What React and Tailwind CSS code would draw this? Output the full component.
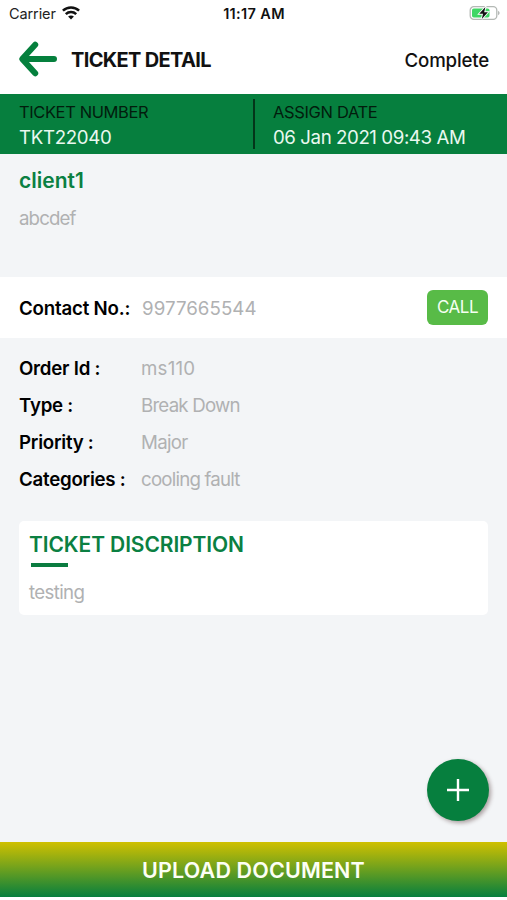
import React from 'react';

const details = [
    { label: 'Order Id :', value: 'ms110', spacing: 'tracking-[0.2px]' },
    { label: 'Type :', value: 'Break Down', spacing: 'tracking-[-0.8px]' },
    { label: 'Priority :', value: 'Major', spacing: 'tracking-[-0.7px]' },
    { label: 'Categories :', value: 'cooling fault', spacing: 'tracking-[-0.8px]' },
];

const WifiIcon = () => (
    <svg className="w-[18px] h-[14px] relative -top-[1px]" viewBox="0 0 18 14" fill="none" stroke="#111" strokeWidth="2.5">
        <path d="M0.9 4.7C5.4 0.4 12.6 0.4 17.1 4.7" />
        <path d="M3.8 8.1C6.7 5.3 11.3 5.3 14.2 8.1" />
        <path d="M6.1 10.6C7.7 9.1 10.3 9.1 11.9 10.6L9 13.5Z" fill="#111" stroke="none" />
    </svg>
);

const BatteryIcon = () => (
    <svg className="w-[32px] h-[16px] relative -top-[1px]" viewBox="0 0 32 16">
        <rect x="1.2" y="1.7" width="26.6" height="12.6" rx="3.6" fill="#fff" stroke="#b4b9b5" strokeWidth="1.3" />
        <path d="M29.2 5.8C31 6.5 31 9.5 29.2 10.2Z" fill="#a5aaa6" />
        <rect x="3" y="3.4" width="17.5" height="9.2" rx="1.8" fill="#3fd765" />
        <path d="M16.4 2L10.2 8.8H14L12.8 14L18.9 7.2H15.2Z" fill="#111" stroke="#fff" strokeWidth="1.8" paintOrder="stroke" />
    </svg>
);

const BackArrow = () => (
    <svg className="w-[40px] h-[38px] relative -top-[2px]" viewBox="0 0 40 38" fill="none" stroke="#05803d" strokeWidth="6" strokeLinecap="round" strokeLinejoin="round">
        <path d="M36 19H6M17.2 4.7L4.2 19L17.2 33.3" />
    </svg>
);

const InfoRow = ({ label, value, spacing }) => (
    <div className="flex items-center h-[36.8px]">
        <span className="w-[122px] text-[18.7px] font-semibold tracking-[-0.25px] text-black whitespace-nowrap">{label}</span>
        <span className={`text-[18.7px] text-[#b0b1b2] ${spacing}`}>{value}</span>
    </div>
);

const App = () => {
    return (
        <div className="relative w-full h-[900px] flex flex-col overflow-hidden bg-[#f3f5f7] font-['Inter',sans-serif]">
            {/* Status bar */}
            <div className="h-[27px] shrink-0 grid grid-cols-3 items-center bg-white pl-[9px] pr-[6px] text-[14.5px] text-[#222]">
                <div className="flex items-center gap-[6px]">
                    <span className="tracking-[-0.1px]">Carrier</span>
                    <WifiIcon />
                </div>
                <span className="text-center font-semibold tracking-[0.35px] text-[#111] -ml-[2px]">11:17 AM</span>
                <div className="flex justify-end"><BatteryIcon /></div>
            </div>

            {/* Header */}
            <header className="h-[67px] shrink-0 flex items-center bg-white pl-[18px] pr-[18px]">
                <BackArrow />
                <h1 className="ml-[13px] pb-[1px] text-[20px] leading-[28px] font-bold tracking-[-0.65px] text-[#111]">TICKET DETAIL</h1>
                <button className="ml-auto pt-[1px] text-[18.7px] font-medium tracking-[-0.2px] text-[#111]">Complete</button>
            </header>

            {/* Ticket summary */}
            <section className="h-[60px] shrink-0 flex items-center bg-[#067f3e] text-[18.7px] leading-[25px] whitespace-nowrap">
                <div className="w-[253px] pl-[19px] pt-[2px]">
                    <div className="text-[16.5px] tracking-[-0.4px] text-[#021c0d]">TICKET NUMBER</div>
                    <div className="tracking-[-0.35px] text-[#e9f8ef]">TKT22040</div>
                </div>
                <div className="w-[2px] h-[50px] bg-[#03361a]" />
                <div className="pl-[18px] pt-[2px]">
                    <div className="text-[16.5px] tracking-[-0.35px] text-[#021c0d]">ASSIGN DATE</div>
                    <div className="tracking-[-0.43px] text-[#e9f8ef]">06 Jan 2021 09:43 AM</div>
                </div>
            </section>

            {/* Client */}
            <section className="h-[123px] shrink-0 px-[19px] pt-[13px]">
                <h2 className="text-[21px] leading-[28px] font-semibold text-[#0b8042]">client1</h2>
                <p className="mt-[11px] text-[18.7px] leading-[26px] tracking-[-0.9px] text-[#b0b1b2]">abcdef</p>
            </section>

            {/* Contact */}
            <section className="h-[61px] shrink-0 flex items-center bg-white px-[19px]">
                <span className="w-[123px] pt-[3px] text-[18.7px] font-semibold tracking-[-0.2px] text-black">Contact No.:</span>
                <span className="pt-[3px] text-[18.7px] tracking-[0.05px] text-[#b0b1b2]">9977665544</span>
                <button className="ml-auto w-[61px] h-[35px] rounded-[6px] bg-[#58bb47] pt-[1px] text-[17px] tracking-[-0.5px] text-[#f4fff2]">CALL</button>
            </section>

            {/* Order info */}
            <section className="shrink-0 px-[19px] pt-[13px]">
                {details.map((item) => (
                    <InfoRow key={item.label} {...item} />
                ))}
            </section>

            {/* Description */}
            <section className="mx-[19px] mt-[23px] h-[94px] shrink-0 rounded-[5px] bg-white pl-[10px] pt-[9px]">
                <h2 className="text-[21px] leading-[29px] font-semibold tracking-[-0.1px] text-[#0b8042]">TICKET DISCRIPTION</h2>
                <div className="ml-[2px] mt-[4px] w-[37px] h-[4px] bg-[#0b7c40]" />
                <p className="mt-[13px] text-[18.7px] leading-[26px] tracking-[-0.65px] text-[#b0b1b2]">testing</p>
            </section>

            {/* Floating add button */}
            <button className="absolute left-[427px] top-[759px] w-[62px] h-[62px] rounded-full bg-[#067f3e] flex items-center justify-center shadow-[2px_2px_4px_rgba(60,30,30,0.4)]">
                <svg className="w-[22px] h-[22px]" viewBox="0 0 22 22" stroke="#fff" strokeWidth="2.4">
                    <path d="M11 0V22M0 11H22" />
                </svg>
            </button>

            {/* Upload */}
            <div className="mt-auto shrink-0 bg-white pb-[3px]">
                <button className="w-full h-[55px] flex items-center justify-center bg-[linear-gradient(to_bottom,#d0c000,#067f3e)] pt-[2px] text-[21.5px] font-semibold tracking-[0.15px] text-[#fdfff5]">
                    UPLOAD DOCUMENT
                </button>
            </div>
        </div>
    );
};

export default App;
